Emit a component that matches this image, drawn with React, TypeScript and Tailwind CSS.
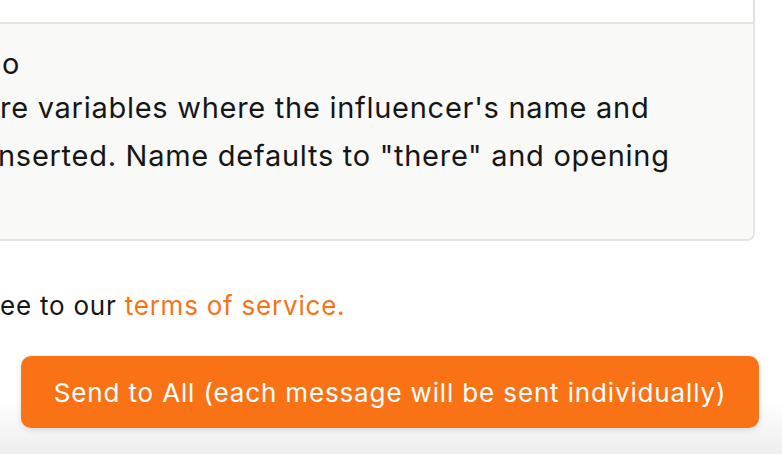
import React from 'react';

const App: React.FC = () => {
  return (
    <div className="w-[782px] h-[454px] overflow-hidden bg-white text-[#161616] font-['Inter','Noto_Sans',sans-serif] flex flex-col">
      {/* Message card (left side is off screen) */}
      <section className="-ml-[24px] mr-[27px] border-2 border-t-0 border-[#e6e3e3] rounded-b-[8px] overflow-hidden">
        <div className="h-[24px] bg-white border-b-2 border-[#e6e3e3]" />
        <div className="bg-[#f9f9f8] pt-[20px] pb-[66px] pl-[22px] text-[29px] tracking-[0.025em] whitespace-nowrap">
          <p className="leading-[40px] pl-[2px]">o</p>
          <p className="leading-[48px]">re variables where the influencer's name and</p>
          <p className="leading-[48px] -ml-[2px]">nserted. Name defaults to "there" and opening</p>
        </div>
      </section>

      {/* Terms */}
      <p className="mt-[49px] text-[26px] tracking-[0.03em] leading-[32px] whitespace-nowrap">
        ee to our <a className="text-[#f97316]">terms of service.</a>
      </p>

      {/* Sticky footer */}
      <div className="mt-auto pt-[34px] pb-[26px] pl-[21px] pr-[23px] bg-gradient-to-b from-white from-60% to-[#eeeeee]">
        <button className="w-full h-[72px] rounded-[10px] bg-[#f97316] text-white text-[26px] tracking-[0.033em] shadow-[0_2px_6px_rgba(0,0,0,0.12)]">
          Send to All (each message will be sent individually)
        </button>
      </div>
    </div>
  );
};

export default App;
